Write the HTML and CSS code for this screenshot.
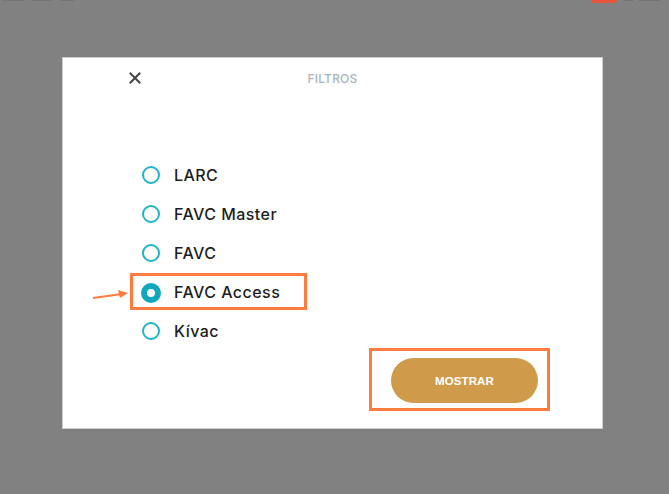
FILE: index.html
```html
<!DOCTYPE html>
<html lang="es">
<head>
<meta charset="utf-8">
<title>Filtros</title>
<link rel="stylesheet" href="styles.css">
</head>
<body>
<div class="statusbar">
  <span class="status-left"><i class="dash w1"></i><i class="dash w2"></i><i class="dash w3"></i></span>
  <span class="status-right"><span class="rec"></span><i class="dash w4"></i><i class="dash w5"></i></span>
</div>
<div class="modal">
  <div class="header">
    <button class="close" aria-label="Cerrar">
      <svg width="12" height="12" viewBox="0 0 12 12"><path d="M1.5 1.5 L10.5 10.5 M10.5 1.5 L1.5 10.5" stroke="#444" stroke-width="2" stroke-linecap="square"/></svg>
    </button>
    <div class="title">FILTROS</div>
    <div></div>
  </div>
  <div class="options">
    <label class="option"><span class="radio"></span><span class="label">LARC</span></label>
    <label class="option"><span class="radio"></span><span class="label">FAVC Master</span></label>
    <label class="option"><span class="radio"></span><span class="label">FAVC</span></label>
    <label class="option"><span class="radio checked"></span><span class="label">FAVC Access</span></label>
    <label class="option"><span class="radio"></span><span class="label">Kívac</span></label>
  </div>
  <div class="footer">
    <button class="show">MOSTRAR</button>
  </div>
  <div class="mark mark-option"></div>
  <div class="mark mark-button"></div>
  <svg class="arrow" width="38" height="12" viewBox="0 0 38 12"><path d="M1 10 L28 6.2" stroke="#fe7d3e" stroke-width="2" fill="none"/><path d="M36 5 L26 2 L28 10 Z" fill="#fe7d3e"/></svg>
</div>
</body>
</html>
```
FILE: styles.css
```css
html, body {
  margin: 0;
  padding: 0;
}
body {
  background: #818181;
  width: 669px;
  height: 494px;
  overflow: hidden;
  font-family: "Inter", "Liberation Sans", sans-serif;
}
.statusbar {
  height: 4px;
  overflow: hidden;
  display: flex;
  justify-content: space-between;
}
.status-left {
  display: flex;
  gap: 8px;
  padding-left: 2px;
}
.status-right {
  display: flex;
  gap: 6px;
  padding-right: 8px;
}
.dash {
  display: block;
  height: 1px;
  background: #767676;
}
.w1 { width: 22px; }
.w2 { width: 20px; }
.w3 { width: 14px; }
.w4 { width: 10px; }
.w5 { width: 22px; }
.rec {
  display: block;
  width: 26px;
  height: 3px;
  background: #e9533b;
  border-radius: 0 0 8px 8px;
}
.modal {
  position: relative;
  box-sizing: border-box;
  width: 541px;
  margin: 53px 0 0 62px;
  background: #fff;
  border: 1px solid #cdcdcd;
  padding-bottom: 25px;
}
.header {
  display: grid;
  grid-template-columns: 1fr auto 1fr;
  align-items: center;
  height: 41px;
}
.close {
  justify-self: start;
  margin-left: 65px;
  margin-top: -2px;
  width: 14px;
  height: 14px;
  padding: 0;
  border: 0;
  background: none;
  display: flex;
  align-items: center;
  justify-content: center;
}
.title {
  font-family: "Inter", "Liberation Sans", sans-serif;
  font-size: 12px;
  font-weight: 500;
  color: #a9b4bd;
  letter-spacing: 0.2px;
}
.options {
  margin-top: 56px;
  padding-left: 78px;
  display: flex;
  flex-direction: column;
}
.option {
  height: 39px;
  display: flex;
  align-items: center;
  gap: 14px;
}
.radio {
  box-sizing: border-box;
  width: 18px;
  height: 18px;
  border: 2px solid #22b3c7;
  border-radius: 50%;
  margin-left: 1px;
}
.radio.checked {
  width: 20px;
  height: 20px;
  margin-left: 0;
  margin-right: -1px;
  border: 6px solid #10a6bd;
  margin-top: 2px;
}
.label {
  font-family: "Inter", "Liberation Sans", sans-serif;
  font-size: 16px;
  font-weight: 500;
  color: #1e1e1e;
  letter-spacing: 0.45px;
}
.footer {
  display: flex;
  justify-content: flex-end;
  padding-right: 64px;
  margin-top: 8px;
}
.show {
  width: 147px;
  height: 45px;
  border: 0;
  border-radius: 23px;
  background: #cf9b4b;
  color: #fff;
  font-family: "Liberation Sans", Arial, sans-serif;
  font-weight: 700;
  font-size: 11.5px;
  letter-spacing: 0.1px;
}
.mark {
  position: absolute;
  box-sizing: border-box;
  border: 3px solid #fe7d3e;
}
.mark-option {
  left: 67px;
  top: 215px;
  width: 177px;
  height: 37px;
}
.mark-button {
  left: 306px;
  top: 290px;
  width: 181px;
  height: 63px;
}
.arrow {
  position: absolute;
  left: 29px;
  top: 230px;
}
```
